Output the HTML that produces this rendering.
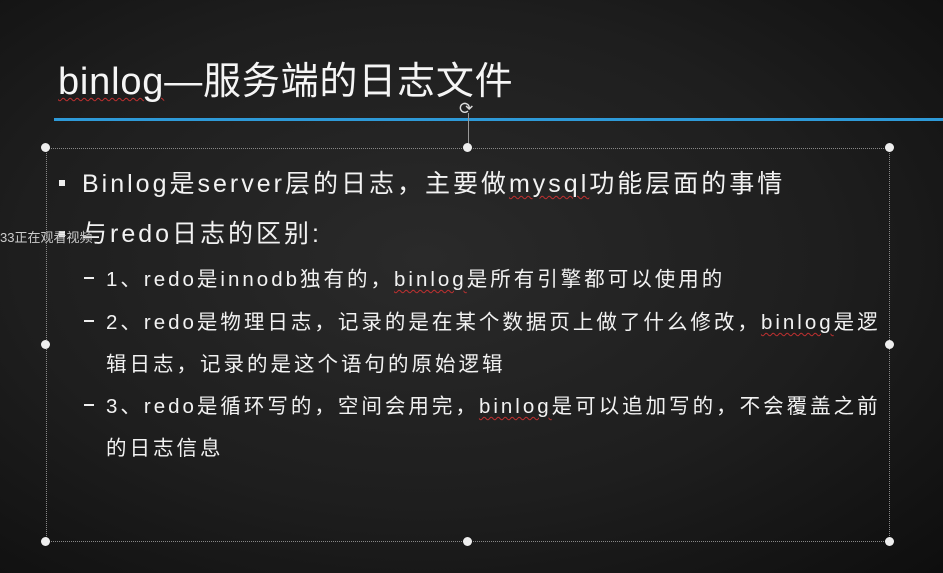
<!DOCTYPE html><html><head><meta charset="utf-8"><style>
body{margin:0;width:943px;height:573px;overflow:hidden;background:radial-gradient(ellipse at 45% 45%,#2a2a2a 0%,#1e1e1e 55%,#0e0e0e 100%);font-family:"Liberation Sans","Noto Sans CJK SC",sans-serif;color:#f2f2f2;position:relative}
.a{position:absolute;white-space:nowrap}
.u{text-decoration:underline wavy #c03030;text-decoration-thickness:1px;text-underline-offset:3px}
.h{position:absolute;width:9px;height:9px;border-radius:50%;background:#eee;margin:-5px 0 0 -5px}
.s{font-size:20.5px;letter-spacing:3px}
.b{font-size:25px;letter-spacing:3px}
.sq{position:absolute;width:6px;height:6px;background:#eee}
.d{position:absolute;width:10px;height:2px;background:#eee}
</style></head><body>
<div class="a" style="left:58px;top:50px;font-size:38px;letter-spacing:0.8px;color:#f5f5f5"><span class="u">binlog</span>—服务端的日志文件</div>
<div class="a" style="left:54px;top:118px;width:889px;height:3px;background:#2e9ad8"></div>
<div class="a" style="left:46px;top:148px;width:844px;height:394px;border:1px dotted #888;box-sizing:border-box"></div>
<div class="a" style="left:468px;top:113px;width:1px;height:35px;background:#999"></div>
<div class="a" style="left:459px;top:99px;font-size:17px;color:#ddd">⟳</div>
<div class="h" style="left:46px;top:148px"></div><div class="h" style="left:468px;top:148px"></div><div class="h" style="left:890px;top:148px"></div>
<div class="h" style="left:46px;top:345px"></div><div class="h" style="left:890px;top:345px"></div>
<div class="h" style="left:46px;top:542px"></div><div class="h" style="left:468px;top:542px"></div><div class="h" style="left:890px;top:542px"></div>
<div class="sq" style="left:59px;top:180px"></div>
<div class="a b" style="left:82px;top:164px">Binlog是server层的日志，主要做<span class="u">mysql</span>功能层面的事情</div>
<div class="sq" style="left:59px;top:231px"></div>
<div class="a b" style="left:82px;top:214px">与redo日志的区别:</div>
<div class="a" style="left:0;top:227px;font-size:13px;color:#ccc">33正在观看视频</div>
<div class="d" style="left:84px;top:277px"></div><div class="a s" style="left:106px;top:262px">1、redo是innodb独有的，<span class="u">binlog</span>是所有引擎都可以使用的</div>
<div class="d" style="left:84px;top:320px"></div><div class="a s" style="left:106px;top:305px">2、redo是物理日志，记录的是在某个数据页上做了什么修改，<span class="u">binlog</span>是逻</div>
<div class="a s" style="left:106px;top:347px">辑日志，记录的是这个语句的原始逻辑</div>
<div class="d" style="left:84px;top:404px"></div><div class="a s" style="left:106px;top:389px">3、redo是循环写的，空间会用完，<span class="u">binlog</span>是可以追加写的，不会覆盖之前</div>
<div class="a s" style="left:106px;top:431px">的日志信息</div>
</body></html>
